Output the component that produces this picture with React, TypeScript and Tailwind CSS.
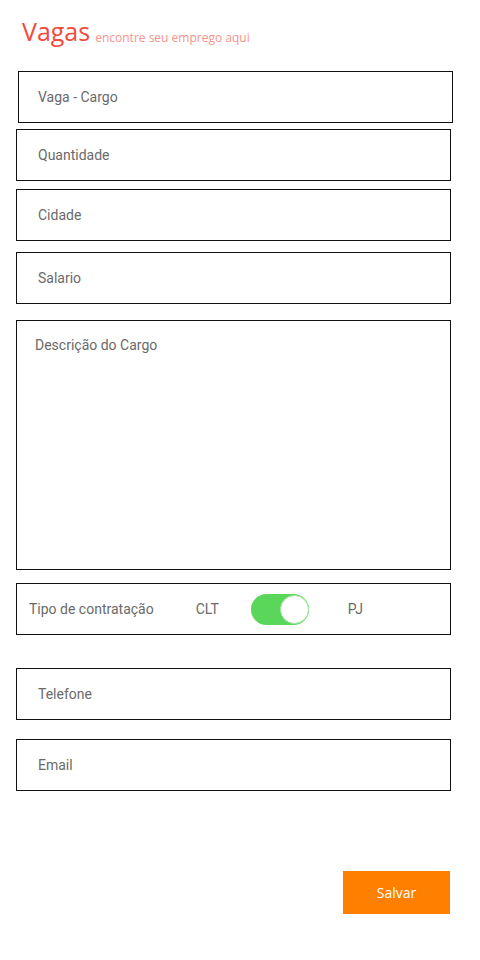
import React, { useState } from 'react';

const Field: React.FC<{ label: string; className?: string; pad?: string }> = ({ label, className = '', pad = 'pl-[21px]' }) => (
    <div className={`h-[52px] w-[435px] border border-[#111] flex items-center ${pad} ${className}`}>
        <span className="text-[14px] text-[#6a6a6a] font-['Roboto',sans-serif]">{label}</span>
    </div>
);

export default function App() {
    const [clt, setClt] = useState(true);

    return (
        <div className="w-[480px] h-[960px] bg-white relative">
            <div className="pt-[15px] pl-[22px] flex items-end font-['Open_Sans','Noto_Sans',sans-serif]">
                <h1 className="text-[25px] leading-[32px] text-[#f24a3c]">Vagas</h1>
                <span className="text-[12px] leading-[16px] text-[#f8928a] ml-[5px] mb-[1px]">encontre seu emprego aqui</span>
            </div>

            <div className="flex flex-col pl-[16px]">
                <Field label="Vaga - Cargo" className="mt-[24px] ml-[2px]" pad="pl-[19px]" />
                <Field label="Quantidade" className="mt-[6px]" />
                <Field label="Cidade" className="mt-[8px]" />
                <Field label="Salario" className="mt-[11px]" />

                <div className="mt-[16px] h-[250px] w-[435px] border border-[#111] pl-[18px] pt-[11px]">
                    <span className="text-[14px] text-[#6a6a6a] font-['Roboto',sans-serif]">Descrição do Cargo</span>
                </div>

                <div className="mt-[13px] h-[52px] w-[435px] border border-[#111] flex items-center pl-[12px] font-['Roboto',sans-serif] text-[14px] text-[#6a6a6a]">
                    <span>Tipo de contratação</span>
                    <span className="ml-[42px]">CLT</span>
                    <button
                        onClick={() => setClt(!clt)}
                        className={`ml-[32px] w-[58px] h-[31px] rounded-full relative ${clt ? 'bg-[#5ad75a]' : 'bg-[#ddd]'}`}
                    >
                        <span className={`absolute top-[1px] w-[29px] h-[29px] rounded-full bg-white border border-[#9fe39f] ${clt ? 'right-[0px]' : 'left-[0px]'}`} />
                    </button>
                    <span className="ml-[39px]">PJ</span>
                </div>

                <Field label="Telefone" className="mt-[33px]" />
                <Field label="Email" className="mt-[19px]" />

                <div className="w-[435px] flex justify-end mt-[80px]">
                    <button className="w-[107px] h-[43px] mr-[1px] bg-[#ff8000] text-white text-[14px] font-['Open_Sans','Noto_Sans',sans-serif]">
                        Salvar
                    </button>
                </div>
            </div>
        </div>
    );
}
